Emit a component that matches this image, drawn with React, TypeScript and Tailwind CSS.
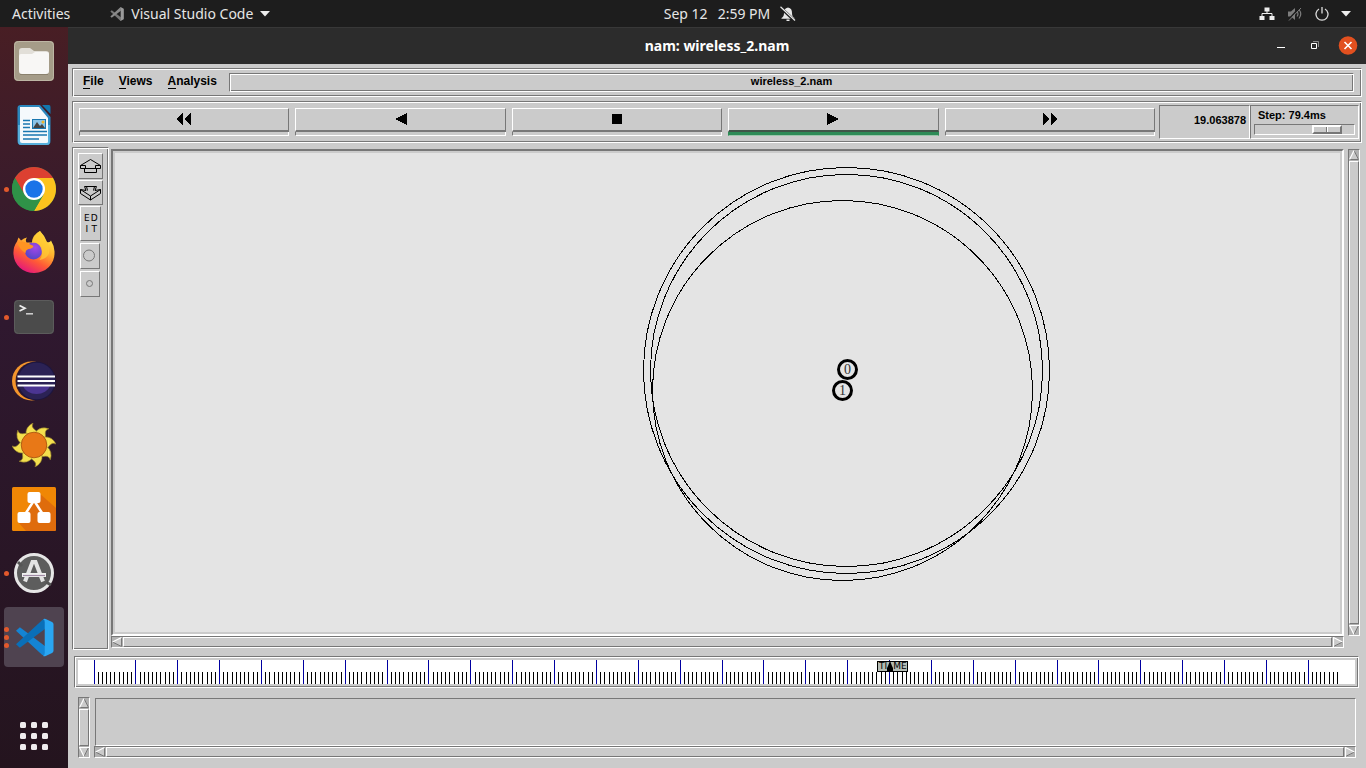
import React from "react";

const groove =
  "border border-t-[#777] border-l-[#777] border-b-white border-r-white shadow-[inset_1px_1px_0_#fff,inset_-1px_-1px_0_#777]";
const sunken = "border border-t-[#777] border-l-[#777] border-b-white border-r-white";
const raised = "border border-t-white border-l-white border-b-[#777] border-r-[#777]";

/* ---------- Desktop icons ---------- */

function VsCodeMark({ size, mono = false }: { size: number; mono?: boolean }) {
  const a = mono ? "#8a8a8a" : "#0a6fb8";
  const b = mono ? "#777" : "#1484d4";
  const c = mono ? "#9a9a9a" : "#2aa6f2";
  return (
    <svg width={size} height={size} viewBox="0 0 40 40" aria-hidden="true">
      <path d="M1 13 L5 9.5 L31 29 V39 L28 38 Z" fill={b} />
      <path d="M1 27 L5 30.5 L31 11 V1 L28 2 Z" fill={a} />
      <path d="M28.5 1.2 Q30 .2 31.5 1 L38 4.2 Q39.5 5 39.5 6.500 V33.500 Q39.500 35 38 35.800 L31.500 39 Q30 39.800 28.500 38.800 Q30.500 39 30.500 36 V4 Q30.500 1 28.500 1.200 Z" fill={c} />
    </svg>
  );
}

function FilesIcon() {
  return (
    <svg width="44" height="44" viewBox="0 0 44 44" aria-hidden="true">
      <rect x="2" y="2" width="40" height="40" rx="4" fill="#a59c88" />
      <rect x="2.500" y="2.500" width="39" height="39" rx="4" fill="none" stroke="#bdb6a4" />
      <path d="M7 12 Q7 9 10 9 H18 L22 12 H34 Q37 12 37 15 V20 H7Z" fill="#e2dfd8" />
      <path d="M7 17 Q7 15 9 15 H20 L23 13 H35 Q37 13 37 15 V32 Q37 35 34 35 H10 Q7 35 7 32Z" fill="#f8f7f5" />
      <path d="M8 35.500 H36" stroke="#8a816d" />
    </svg>
  );
}

function WriterIcon() {
  return (
    <svg width="44" height="44" viewBox="0 0 44 44" aria-hidden="true">
      <path d="M9 2 H28 L38.500 14 V38 Q38.500 42 35 42 H9 Q5.500 42 5.500 38 V5 Q5.500 2 9 2Z" fill="#2a87bd" />
      <path d="M6 22 H38 V38 Q38 42 35 42 H9 Q6 42 6 38Z" fill="#58b0dc" />
      <path d="M8 4 H27 L36 15 V39 Q36 40 34 40 H10 Q8 40 8 38Z" fill="#f5f9fc" />
      <path d="M30 2 H37 Q38.500 2 38.500 4 V11Z" fill="#1277ae" />
      <path d="M11 17.500 H18 M11 21 H18 M11 24.500 H18 M11 28.500 H35 M11 32 H35 M11 36 H27" stroke="#1a77b0" strokeWidth="1.600" />
      <rect x="20.500" y="16.500" width="13" height="9" fill="#8cc4e8" stroke="#1a77b0" />
      <path d="M21 25 L25 19 L28 23 L30 21 L33 25Z" fill="#444" />
      <circle cx="31" cy="19" r="1.500" fill="#f0b429" />
    </svg>
  );
}

function ChromeIcon() {
  return (
    <svg width="44" height="44" viewBox="0 0 44 44" aria-hidden="true">
      <circle cx="22" cy="22" r="22" fill="#2f9248" />
      <path d="M2.950 11 L12.500 27.500 L22 22 V11 H41.050 A22 22 0 0 0 2.950 11Z" fill="#dc4031" />
      <path d="M41.050 11 H22 L31.500 27.500 L22 44 A22 22 0 0 0 41.050 11Z" fill="#fcc31e" />
      <path d="M2.950 11 L12.500 27.500 L22 33 L31.500 27.500 L22 44 A22 22 0 0 1 2.950 11Z" fill="#2f9248" />
      <circle cx="22" cy="22" r="11" fill="#fff" />
      <circle cx="22" cy="22" r="8.700" fill="#1a73e8" />
    </svg>
  );
}

function FirefoxIcon() {
  return (
    <svg width="44" height="44" viewBox="0 0 44 44" aria-hidden="true">
      <defs>
        <linearGradient id="fox" x1=".8" y1=".1" x2=".3" y2="1">
          <stop offset="0" stopColor="#ffe94a" />
          <stop offset=".35" stopColor="#ffb02e" />
          <stop offset=".65" stopColor="#ff5a36" />
          <stop offset="1" stopColor="#e3157e" />
        </linearGradient>
        <radialGradient id="globe" cx=".6" cy=".3" r=".8">
          <stop offset="0" stopColor="#a347e8" />
          <stop offset="1" stopColor="#4b45c4" />
        </radialGradient>
      </defs>
      <path d="M28 0 Q33 5 35 11 Q38 12 39 9.500 Q43 16 42.500 22 A20.500 19.500 0 0 1 1.500 23 Q1 16 5 10.500 L6.500 6.500 Q8 8 9 9.500 Q12 7 15 6.500 Q13 9 14.500 11.500 H20 Q21 4 28 0Z" fill="url(#fox)" />
      <circle cx="21.500" cy="20" r="8.500" fill="url(#globe)" />
      <path d="M5.500 12 Q10 9 15 12 L21.500 15 Q21 17.500 16.500 18 Q13.500 19 13.500 22 Q8 19 5.500 12Z" fill="#ff9422" />
      <path d="M20 11.500 Q26 11 28.500 16 Q32 24 27.500 29 Q35 28 37 22 Q38 15 34 10 Q31 4 28 0 Q20 4 20 11.500Z" fill="#ffc933" opacity=".75" />
    </svg>
  );
}

function TerminalIcon() {
  return (
    <svg width="44" height="44" viewBox="0 0 44 44" aria-hidden="true">
      <rect x="2" y="5" width="40" height="34" rx="4" fill="#4b4b4b" />
      <rect x="2.500" y="5.500" width="39" height="33" rx="4" fill="none" stroke="#5c5c5c" />
      <path d="M7.500 10.500 L13 13.300 L7.500 16" fill="none" stroke="#eee" strokeWidth="1.700" />
      <path d="M14 18.800 H21" stroke="#ccc" strokeWidth="1.600" />
    </svg>
  );
}

function EclipseIcon() {
  return (
    <svg width="44" height="44" viewBox="0 0 44 44" aria-hidden="true">
      <circle cx="19.500" cy="22" r="19.500" fill="#f4952c" />
      <circle cx="22.500" cy="22" r="19" fill="#2f182f" />
      <circle cx="24.500" cy="22" r="19.300" fill="#1d1640" />
      <circle cx="24.500" cy="22" r="18.300" fill="#2b2255" />
      <path d="M11 27 A14 11 0 0 0 38 27Z" fill="#4b3592" />
      <path d="M5.500 17.500 H43 M5.500 22 H43 M5.500 26.500 H43" stroke="#fff" strokeWidth="2.200" />
    </svg>
  );
}

function SunIcon() {
  return (
    <svg width="44" height="44" viewBox="0 0 44 44" aria-hidden="true">
      {[0, 45, 90, 135, 180, 225, 270, 315].map((a) => (
        <path
          key={a}
          d="M14 12 Q13 4 21 0 Q19 3.500 22 6 Q26 8.500 27 12Z"
          transform={`rotate(${a} 22 22)`}
          fill="#f4e04e"
          stroke="#93802a"
          strokeWidth=".6"
        />
      ))}
      <circle cx="22" cy="22" r="12.800" fill="#e87817" stroke="#a4520c" strokeWidth=".8" />
    </svg>
  );
}

function DiagramIcon() {
  return (
    <svg width="44" height="44" viewBox="0 0 44 44" aria-hidden="true">
      <rect width="44" height="44" rx="1.500" fill="#f08705" />
      <path d="M27 6 L44 21 V42 Q44 44 42 44 H14 L6 35 L22 16Z" fill="#df6c0c" />
      <path d="M21 15 L12 29 M23 15 L32 29" stroke="#fff" strokeWidth="2.500" />
      <rect x="15.500" y="5" width="13" height="11" rx="2" fill="#fff" />
      <rect x="5.500" y="25" width="13" height="11" rx="2" fill="#fff" />
      <rect x="25.500" y="25" width="13" height="11" rx="2" fill="#fff" />
    </svg>
  );
}

function UpdaterIcon() {
  return (
    <svg width="44" height="44" viewBox="0 0 44 44" aria-hidden="true">
      <circle cx="22" cy="22" r="18.500" fill="#5d5d5d" stroke="#e6e6e6" strokeWidth="3" />
      <path d="M6 11 L10 15 M34 31 L39 34" stroke="#555" strokeWidth="3" />
      <path d="M13 30.500 L20.500 11 H23.500 L31 30.500" fill="none" stroke="#e4e4e4" strokeWidth="4" />
      <path d="M10 24 H34" stroke="#eee" strokeWidth="4" />
      <path d="M11 24.500 H33" stroke="#a08aa5" strokeWidth="1.200" />
    </svg>
  );
}

function AppsGridIcon() {
  return (
    <svg width="44" height="44" viewBox="0 0 44 44" aria-hidden="true">
      {[8, 19, 30].map((y) =>
        [8, 19, 30].map((x) => <rect key={`${x}-${y}`} x={x} y={y} width="6" height="6" rx="1.500" fill="#efecee" />)
      )}
    </svg>
  );
}

const dockItems = [
  { name: "Files", icon: <FilesIcon />, windows: 0, active: false },
  { name: "LibreOffice Writer", icon: <WriterIcon />, windows: 0, active: false },
  { name: "Google Chrome", icon: <ChromeIcon />, windows: 1, active: false },
  { name: "Firefox", icon: <FirefoxIcon />, windows: 0, active: false },
  { name: "Terminal", icon: <TerminalIcon />, windows: 1, active: false },
  { name: "Eclipse", icon: <EclipseIcon />, windows: 0, active: false },
  { name: "Weather", icon: <SunIcon />, windows: 0, active: false },
  { name: "Diagrams", icon: <DiagramIcon />, windows: 0, active: false },
  { name: "Software Updater", icon: <UpdaterIcon />, windows: 1, active: false },
  { name: "Visual Studio Code", icon: <VsCodeMark size={39} />, windows: 3, active: true },
];

function Dock() {
  return (
    <nav
      aria-label="Dock"
      className="flex w-[68px] shrink-0 flex-col gap-1 bg-linear-to-b from-[#481e24] via-[#2f182f] via-40% to-[#24141e] px-1 pt-1 pb-0.5"
    >
      {dockItems.map((item) => (
        <button
          key={item.name}
          aria-label={item.name}
          className={`relative flex size-[60px] shrink-0 items-center justify-center rounded ${
            item.active ? "bg-[#4f4350]" : ""
          }`}
        >
          <span className="absolute inset-y-0 left-0 flex flex-col justify-center gap-[3px]">
            {Array.from({ length: item.windows }, (_, i) => (
              <span key={i} className="size-[5px] rounded-full bg-[#e2592c]" />
            ))}
          </span>
          {item.icon}
        </button>
      ))}
      <button aria-label="Show applications" className="mt-auto flex size-[60px] shrink-0 items-center justify-center">
        <AppsGridIcon />
      </button>
    </nav>
  );
}

function Caret() {
  return (
    <svg width="10" height="6" viewBox="0 0 10 6" aria-hidden="true">
      <path d="M0 0 H10 L5 5.500Z" fill="#eee" />
    </svg>
  );
}

function TopBar() {
  return (
    <header className="grid h-[27px] shrink-0 grid-cols-[94px_1fr_auto_1fr] items-center bg-[#1d1d1d] text-sm text-[#e6e6e6]">
      <div className="col-span-2 flex items-center pl-3">
        <button className="mr-10">Activities</button>
        <button className="flex items-center">
          <VsCodeMark size={14} mono />
          <span className="mx-[7px]">Visual Studio Code</span>
          <Caret />
        </button>
      </div>
      <button className="flex items-center gap-2.5">
        <span className="flex gap-2.5">
          <span>Sep 12</span>
          <span>2:59 PM</span>
        </span>
        <svg width="16" height="16" viewBox="0 0 16 16" aria-label="Notifications off">
          <path d="M8 1.500 C5 2 4 4 4 7 C4 10 3 11 1.500 12 V12.800 H14.500 V12 C13 11 12 10 12 7 C12 4 11 2 8 1.500Z M6.500 13.500 H9.500 V15 H6.500Z" fill="#e8e8e8" />
          <path d="M.5 1.500 L15 15" stroke="#1d1d1d" strokeWidth="3" />
          <path d="M.5 .8 L15 14.500" stroke="#e8e8e8" strokeWidth="1.200" />
        </svg>
      </button>
      <button aria-label="System menu" className="flex items-center gap-3 justify-self-end pr-[15px]">
        <svg width="16" height="14" viewBox="0 0 16 14" aria-hidden="true">
          <path d="M5.500 .5 H10.500 V4.500 H5.500Z M.5 9 H5.500 V13 H.5Z M10.500 9 H15.500 V13 H10.500Z" fill="#eee" />
          <path d="M8 4 V6.500 M3 9 V6.500 H13 V9" fill="none" stroke="#eee" />
        </svg>
        <svg width="16" height="16" viewBox="0 0 16 16" aria-hidden="true">
          <path d="M1 5.500 H4 L8 2 V14 L4 10.500 H1Z" fill="#7d7d7d" />
          <path d="M10 5.500 Q12 8 10 10.500 M12 3.500 Q15.500 8 12 12.500" fill="none" stroke="#7d7d7d" strokeWidth="1.200" />
          <path d="M2 13 L13 1" stroke="#1d1d1d" strokeWidth="1.500" />
          <path d="M2 14.500 L14 2" stroke="#7d7d7d" />
        </svg>
        <svg width="14" height="14" viewBox="0 0 14 14" aria-hidden="true">
          <path d="M4 2 A6 6 0 1 0 10 2 M7 0 V6.500" fill="none" stroke="#ddd" strokeWidth="1.300" />
        </svg>
        <Caret />
      </button>
    </header>
  );
}

/* ---------- Window ---------- */

function TitleBar() {
  return (
    <div className="grid h-[37px] shrink-0 grid-cols-[1fr_auto_1fr] items-center border-t border-[#383838] bg-[#2c2c2c] text-white">
      <h1 className="col-start-2 text-sm font-bold">nam: wireless_2.nam</h1>
      <div className="flex items-center justify-self-end pr-2">
        <button aria-label="Minimize" className="mr-5">
          <svg width="14" height="14" viewBox="0 0 14 14">
            <path d="M3 8.500 H11" stroke="#fff" />
          </svg>
        </button>
        <button aria-label="Restore" className="mr-4">
          <svg width="14" height="14" viewBox="0 0 14 14">
            <path d="M3.500 4.500 H8.500 V9.500 H3.500Z" fill="none" stroke="#fff" />
            <path d="M5 2.500 H10.500 V8" fill="none" stroke="#888" />
          </svg>
        </button>
        <button aria-label="Close">
          <svg width="20" height="20" viewBox="0 0 20 20">
            <circle cx="10" cy="9.500" r="9.300" fill="#e2501f" />
            <path d="M6.500 6 L13.500 13 M13.500 6 L6.500 13" stroke="#fff" strokeWidth="1.600" />
          </svg>
        </button>
      </div>
    </div>
  );
}

function MenuBar() {
  return (
    <div className={`mx-1 flex h-[29px] shrink-0 items-start pt-1 pr-[7px] pl-2.5 ${groove}`}>
      <div role="menubar" className="flex w-[146px] gap-[15px] text-xs leading-4 font-bold">
        {["File", "Views", "Analysis"].map((label) => (
          <button key={label} role="menuitem">
            <span className="border-b border-black">{label[0]}</span>
            {label.slice(1)}
          </button>
        ))}
      </div>
      <div className={`h-[19px] flex-1 text-center text-[11px] leading-[15px] font-bold ${groove}`}>wireless_2.nam</div>
    </div>
  );
}

const transport = [
  { name: "Rewind", d: "M0 6 L7 0 V12Z M8 6 L15 0 V12Z", active: false },
  { name: "Play backward", d: "M2 6 L14 0 V12Z", active: false },
  { name: "Stop", d: "M3 1 H13 V11 H3Z", active: false },
  { name: "Play forward", d: "M2 0 L14 6 L2 12Z", active: true },
  { name: "Fast forward", d: "M1 0 L8 6 L1 12Z M9 0 L16 6 L9 12Z", active: false },
];

function ControlBar() {
  return (
    <div className={`mx-1 flex h-[42px] shrink-0 items-start pt-[3px] pr-0.5 pl-1.5 ${groove}`}>
      <div className="mr-1 flex flex-1 gap-1.5 pt-[3px]">
        {transport.map((t) => (
          <div key={t.name} className="flex flex-1 flex-col">
            <button
              aria-label={t.name}
              className={`flex h-6 items-center justify-center border border-b-2 border-t-white border-l-white border-r-[#777] ${
                t.active ? "border-b-[#3f5548]" : "border-b-[#777]"
              }`}
            >
              <svg width="16" height="13" viewBox="0 0 16 13" shapeRendering="crispEdges" aria-hidden="true">
                <path d={t.d} />
              </svg>
            </button>
            <div
              className={`h-1 border ${
                t.active
                  ? "border-[#2e8b57] border-b-[#9cc5ab] bg-[#2e8b57]"
                  : "border-t-0 border-l-[#777] border-r-white border-b-white"
              }`}
            />
          </div>
        ))}
      </div>
      <output className={`h-[34px] w-[91px] pr-[3px] text-right text-[11px] leading-7 font-bold ${sunken}`}>
        19.063878
      </output>
      <div className={`flex h-[34px] w-[109px] flex-col px-[3px] text-[11px] leading-[18px] font-bold ${sunken}`}>
        <label htmlFor="step" className="pl-1">
          Step: 79.4ms
        </label>
        <input
          id="step"
          type="range"
          min={0}
          max={100}
          defaultValue={82}
          className="h-[11px] w-full appearance-none border border-t-[#777] border-l-[#777] border-r-white border-b-white bg-transparent [&::-webkit-slider-thumb]:h-[9px] [&::-webkit-slider-thumb]:w-[30px] [&::-webkit-slider-thumb]:appearance-none [&::-webkit-slider-thumb]:border-2 [&::-webkit-slider-thumb]:border-t-white [&::-webkit-slider-thumb]:border-l-white [&::-webkit-slider-thumb]:border-r-[#777] [&::-webkit-slider-thumb]:border-b-[#777] [&::-webkit-slider-thumb]:bg-[linear-gradient(to_right,#cbcbcb_12px,#777_12px,#777_13px,#fff_13px,#fff_14px,#cbcbcb_14px)]"
        />
      </div>
    </div>
  );
}

type Direction = "up" | "down" | "left" | "right";

const arrowEdges: Record<Direction, { fill: string; light: string; dark: string }> = {
  up: { fill: "M5 0 L10 10 H0Z", light: "M0.5 9.500 L5 .5", dark: "M5 .5 L9.500 9.500 H0" },
  down: { fill: "M0 0 H10 L5 10Z", light: "M10 .5 H.5 L5 9.500", dark: "M5 9.500 L9.500 .5" },
  left: { fill: "M0 5 L10 0 V10Z", light: "M.5 5 L9.500 .5", dark: "M9.500 .5 V9.500 L.5 5" },
  right: { fill: "M0 0 L10 5 L0 10Z", light: "M.5 10 V.5 L9.500 5", dark: "M9.500 5 L.5 9.500" },
};

function ScrollArrow({ dir }: { dir: Direction }) {
  const e = arrowEdges[dir];
  return (
    <button aria-label={`Scroll ${dir}`} className="size-2.5 shrink-0">
      <svg width="10" height="10" viewBox="0 0 10 10" className="block">
        <path d={e.fill} fill="#cbcbcb" />
        <path d={e.dark} fill="none" stroke="#777" />
        <path d={e.light} fill="none" stroke="#fff" strokeWidth="1.200" />
      </svg>
    </button>
  );
}

function ScrollBar({ vertical = false }: { vertical?: boolean }) {
  return (
    <div
      className={`flex shrink-0 gap-px bg-[#b1b1b1] ${sunken} ${vertical ? "w-3 flex-col" : "h-3"}`}
    >
      <ScrollArrow dir={vertical ? "up" : "left"} />
      <div className={`flex-1 bg-[#cbcbcb] ${raised}`} />
      <ScrollArrow dir={vertical ? "down" : "right"} />
    </div>
  );
}

function ToolPanel() {
  return (
    <div className={`flex w-[37px] shrink-0 flex-col items-start pt-[5px] pl-[5px] ${groove}`}>
      <button aria-label="Zoom in" className={`mb-px flex h-[26px] w-[25px] items-center justify-center ${raised}`}>
        <svg width="23" height="16" viewBox="0 0 23 16" fill="none" stroke="#000" aria-hidden="true">
          <path d="M11.500 1.500 L21.500 7.500 V10.500 H17 M6 10.500 H1.500 V7.500 L11.500 1.500 M1.500 7.500 H6.500 V10.500 M21.500 7.500 H16.500 V10.500 M5.500 10.500 H17.500 V14.500 H5.500Z" />
        </svg>
      </button>
      <button aria-label="Zoom out" className={`mb-px flex h-[25px] w-[25px] items-center justify-center ${raised}`}>
        <svg width="23" height="18" viewBox="0 0 23 18" fill="none" stroke="#000" aria-hidden="true">
          <path d="M5.500 2.500 H17.500 L16 6.500 L21.500 5.500 V9.500 L11.500 16 L1.500 9.500 V5.500 L7 6.500Z M1.500 5.500 L11.500 12 L21.500 5.500 M11.500 12 V16 M7.500 2.500 L8.500 6.500 M15.500 2.500 L14.500 6.500" />
        </svg>
      </button>
      <button
        className={`mb-0.5 ml-0.5 grid h-[35px] w-[21px] grid-cols-2 content-center px-0.5 font-['DejaVu_Sans',sans-serif] text-[9px] leading-[11px] ${raised}`}
        aria-label="Edit"
      >
        <span>E</span>
        <span>D</span>
        <span>I</span>
        <span>T</span>
      </button>
      <button aria-label="Larger nodes" className={`mb-0.5 ml-0.5 flex h-[26px] w-5 items-center justify-center ${raised}`}>
        <svg width="14" height="14" viewBox="0 0 14 14" aria-hidden="true">
          <circle cx="6" cy="6.500" r="5.500" fill="none" stroke="#777" />
        </svg>
      </button>
      <button aria-label="Smaller nodes" className={`ml-0.5 flex h-[26px] w-5 items-center justify-center ${raised}`}>
        <svg width="8" height="8" viewBox="0 0 8 8" aria-hidden="true">
          <circle cx="3.500" cy="3.500" r="3" fill="none" stroke="#777" />
        </svg>
      </button>
    </div>
  );
}

const waves = [
  { cx: 731.5, cy: 217.5, r: 203 },
  { cx: 731.5, cy: 217.5, r: 196 },
  { cx: 727.5, cy: 237.5, r: 190 },
];

const nodes = [
  { id: "0", x: 732.5, y: 216.5 },
  { id: "1", x: 727.5, y: 237.5 },
];

function NetworkView() {
  return (
    <div className="min-h-0 flex-1 border-2 border-t-[#777] border-l-[#777] border-r-white border-b-white p-0.5">
      <svg className="block size-full bg-[#e4e4e4]" role="img" aria-label="Network animation">
        <g fill="none" stroke="#000" shapeRendering="crispEdges">
          {waves.map((w, i) => (
            <circle key={i} cx={w.cx} cy={w.cy} r={w.r} />
          ))}
        </g>
        {nodes.map((n) => (
          <g key={n.id}>
            <circle cx={n.x} cy={n.y} r="9" fill="none" stroke="#000" strokeWidth="3" />
            <text x={n.x} y={n.y + 4} textAnchor="middle" className="fill-[#333] font-['Liberation_Serif',serif] text-sm">
              {n.id}
            </text>
          </g>
        ))}
      </svg>
    </div>
  );
}

function Timeline() {
  const ticks = Array.from({ length: 298 }, (_, i) => ({ x: 16 + Math.floor(i * 4.187), major: i % 10 === 0 }));
  return (
    <div className={`mt-1.5 mr-[7px] ml-1.5 h-8 shrink-0 p-[3px] ${groove}`}>
      <div className="relative h-6 bg-white">
        <svg
          className="block h-6 w-full"
          viewBox="0 0 1277 24"
          preserveAspectRatio="none"
          shapeRendering="crispEdges"
          aria-hidden="true"
        >
          {ticks.map((t) => (
            <rect
              key={t.x}
              x={t.x}
              y={t.major ? 0 : 12}
              width="1"
              height={t.major ? 24 : 12}
              fill={t.major ? "#0000a0" : "#000"}
            />
          ))}
        </svg>
        <div className="absolute top-px left-[62.6%] flex h-[11px] w-[31px] items-center justify-center border border-black bg-[#b4bcb4] font-['DejaVu_Sans',sans-serif] text-[9px] leading-[9px]">
          TI
          <svg width="6" height="9" viewBox="0 0 6 9" aria-hidden="true">
            <path d="M2.500 0 H3.500 L5 4 L6 6 V9 H0 V6 L1 4Z" />
          </svg>
          ME
        </div>
      </div>
    </div>
  );
}

function Annotations() {
  return (
    <div className="mt-[9px] mr-2.5 mb-2.5 ml-2.5 flex h-[61px] shrink-0 gap-1">
      <ScrollBar vertical />
      <div className="flex flex-1 flex-col pt-px">
        <div className={`ml-px flex-1 ${sunken}`} />
        <ScrollBar />
      </div>
    </div>
  );
}

export default function App() {
  return (
    <div className="flex h-screen flex-col overflow-hidden font-['Noto_Sans',sans-serif]">
      <TopBar />
      <div className="flex min-h-0 flex-1">
        <Dock />
        <main className="flex min-w-0 flex-1 flex-col bg-[#cbcbcb]">
          <TitleBar />
          <div className="flex min-h-0 flex-1 flex-col pt-1 font-['Liberation_Sans',sans-serif] text-black">
            <MenuBar />
            <div className="h-1 shrink-0" />
            <ControlBar />
            <div className="mt-1 mr-1.5 ml-1 flex min-h-0 flex-1">
              <ToolPanel />
              <div className="ml-0.5 flex min-w-0 flex-1 flex-col py-0.5">
                <NetworkView />
                <ScrollBar />
              </div>
              <div className="ml-1 flex pt-0.5 pb-3.5">
                <ScrollBar vertical />
              </div>
            </div>
            <Timeline />
            <Annotations />
          </div>
        </main>
      </div>
    </div>
  );
}
